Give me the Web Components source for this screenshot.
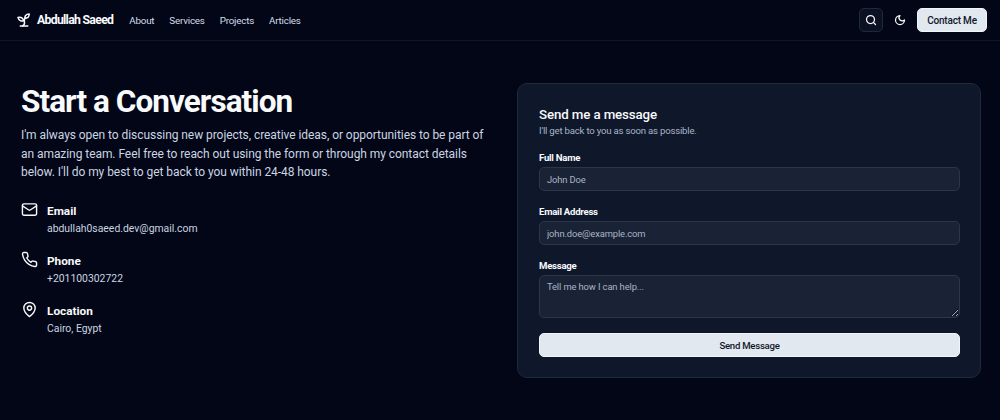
<!DOCTYPE html>
<html lang="en">
<head>
<meta charset="utf-8">
<title>Contact</title>
<style>
  html, body { margin: 0; height: 100%; }
  body {
    background: #020617;
    color: #f8fafc;
    font-family: Roboto, "Open Sans", sans-serif;
    overflow: hidden;
  }
</style>
</head>
<body>
<site-header></site-header>
<contact-page>
  <contact-intro slot="left">
    <contact-item label="Email" value="abdullah0saeed.dev@gmail.com" icon="mail"></contact-item>
    <contact-item label="Phone" value="+201100302722" icon="phone"></contact-item>
    <contact-item label="Location" value="Cairo, Egypt" icon="pin"></contact-item>
  </contact-intro>
  <contact-form slot="right"></contact-form>
</contact-page>

<script>
// Lucide style icons, shared by the header and the contact list
const ICONS = {
  sprout: '<path d="M7 20h10"/><path d="M10 20c5.5-2.5.8-6.4 3-10"/><path d="M9.5 9.4c1.1.8 1.8 2.2 2.3 3.7-2 .4-3.5.4-4.8-.3-1.2-.6-2.3-1.9-3-4.2 2.8-.5 4.4 0 5.5.8z"/><path d="M14.1 6a7 7 0 0 0-1.1 4c1.9-.1 3.3-.6 4.3-1.4 1-1 1.6-2.3 1.7-4.6-2.7.1-4 1-4.9 2z"/>',
  search: '<circle cx="11" cy="11" r="8"/><path d="m21 21-4.3-4.3"/>',
  moon: '<path d="M12 3a6 6 0 0 0 9 9 9 9 0 1 1-9-9Z"/>',
  mail: '<rect width="20" height="16" x="2" y="4" rx="2"/><path d="m22 7-8.97 5.7a1.94 1.94 0 0 1-2.06 0L2 7"/>',
  phone: '<path d="M22 16.92v3a2 2 0 0 1-2.18 2 19.79 19.79 0 0 1-8.63-3.07 19.5 19.5 0 0 1-6-6 19.79 19.79 0 0 1-3.07-8.67A2 2 0 0 1 4.11 2h3a2 2 0 0 1 2 1.72 12.84 12.84 0 0 0 .7 2.81 2 2 0 0 1-.45 2.11L8.09 9.91a16 16 0 0 0 6 6l1.27-1.27a2 2 0 0 1 2.11-.45 12.84 12.84 0 0 0 2.81.7A2 2 0 0 1 22 16.92z"/>',
  pin: '<path d="M20 10c0 6-8 12-8 12s-8-6-8-12a8 8 0 0 1 16 0Z"/><circle cx="12" cy="10" r="3"/>'
};

function icon(name, size, stroke = 2) {
  return `<svg width="${size}" height="${size}" viewBox="0 0 24 24" fill="none" stroke="currentColor" stroke-width="${stroke}" stroke-linecap="round" stroke-linejoin="round">${ICONS[name]}</svg>`;
}

class SiteHeader extends HTMLElement {
  constructor() {
    super();
    this.attachShadow({ mode: 'open' });
  }

  connectedCallback() {
    this.shadowRoot.innerHTML = `
      <style>
        :host {
          display: flex;
          align-items: center;
          height: 40px;
          padding: 0 13px 0 15px;
          border-bottom: 1px solid #0f172a;
        }
        .brand {
          display: flex;
          align-items: center;
          gap: 4px;
          font-size: 12.25px;
          font-weight: 700;
          letter-spacing: -0.7px;
          color: #f8fafc;
          margin-right: 16px;
        }
        .brand svg { display: block; margin-top: -1px; }
        nav { display: flex; gap: 15px; }
        nav a {
          font-size: 9.8px;
          letter-spacing: -0.2px;
          color: #d5dde8;
          text-decoration: none;
        }
        .actions { margin-left: auto; display: flex; align-items: center; }
        .square {
          display: flex;
          align-items: center;
          justify-content: center;
          box-sizing: border-box;
          width: 24px;
          height: 24px;
          border-radius: 5px;
          color: #f8fafc;
        }
        .search { background: #0b1122; border: 1px solid #1e293b; margin-right: 5px; }
        .contact {
          margin-left: 5px;
          box-sizing: border-box;
          height: 24px;
          width: 70px;
          display: flex;
          align-items: center;
          justify-content: center;
          border-radius: 5px;
          background: #e2e8f0;
          border: 1px solid #f1f5f9;
          color: #0f172a;
          font-size: 10px;
          font-weight: 500;
          letter-spacing: -0.2px;
        }
      </style>
      <div class="brand">${icon('sprout', 18)}<span>Abdullah Saeed</span></div>
      <nav>
        <a href="#">About</a>
        <a href="#">Services</a>
        <a href="#">Projects</a>
        <a href="#">Articles</a>
      </nav>
      <div class="actions">
        <div class="square search">${icon('search', 12, 2.5)}</div>
        <div class="square">${icon('moon', 12, 2.5)}</div>
        <div class="contact">Contact Me</div>
      </div>`;
  }
}

class ContactPage extends HTMLElement {
  constructor() {
    super();
    this.attachShadow({ mode: 'open' });
    this.shadowRoot.innerHTML = `
      <style>
        :host {
          display: grid;
          grid-template-columns: 1fr 464px;
          column-gap: 28px;
          padding: 42px 19px 0 21px;
        }
      </style>
      <slot name="left"></slot>
      <slot name="right"></slot>`;
  }
}

class ContactIntro extends HTMLElement {
  constructor() {
    super();
    this.attachShadow({ mode: 'open' });
    this.shadowRoot.innerHTML = `
      <style>
        :host { display: block; }
        h1 {
          margin: 0;
          font-size: 31.5px;
          line-height: 37px;
          font-weight: 700;
          letter-spacing: -0.95px;
          color: #f8fafc;
        }
        p {
          margin: 6px 0 19px;
          font-size: 12px;
          line-height: 18.5px;
          letter-spacing: -0.06px;
          color: #cbd5e1;
        }
        .list { display: flex; flex-direction: column; gap: 12px; }
      </style>
      <h1>Start a Conversation</h1>
      <p>I'm always open to discussing new projects, creative ideas, or opportunities to be part of an amazing team. Feel free to reach out using the form or through my contact details below. I'll do my best to get back to you within 24-48 hours.</p>
      <div class="list"><slot></slot></div>`;
  }
}

class ContactItem extends HTMLElement {
  constructor() {
    super();
    this.attachShadow({ mode: 'open' });
  }

  connectedCallback() {
    this.shadowRoot.innerHTML = `
      <style>
        :host { display: flex; gap: 9px; align-items: flex-start; }
        svg { display: block; color: #f8fafc; }
        .label { font-size: 11.8px; line-height: 18px; font-weight: 700; color: #f8fafc; padding-top: 1.5px; }
        .value { font-size: 10.4px; line-height: 18.5px; color: #cbd5e1; }
      </style>
      <div>${icon(this.getAttribute('icon'), 17)}</div>
      <div>
        <div class="label">${this.getAttribute('label')}</div>
        <div class="value">${this.getAttribute('value')}</div>
      </div>`;
  }
}

class ContactForm extends HTMLElement {
  constructor() {
    super();
    this.attachShadow({ mode: 'open' });
    this.shadowRoot.innerHTML = `
      <style>
        :host {
          display: block;
          box-sizing: border-box;
          height: 295px;
          padding: 21px 20px 0 21px;
          background: #0f172a;
          border: 1px solid #1e293b;
          border-radius: 10px;
        }
        h2 { margin: 0; font-size: 13.3px; line-height: 20px; font-weight: 500; letter-spacing: -0.12px; color: #f8fafc; }
        .sub { margin: 0 0 14px; font-size: 9.6px; line-height: 12px; letter-spacing: -0.2px; color: #a8b5c8; }
        label { display: block; font-size: 9.6px; line-height: 14px; font-weight: 700; letter-spacing: -0.25px; color: #f8fafc; margin-bottom: 2px; }
        .field { margin-bottom: 14px; }
        input, textarea {
          display: block;
          box-sizing: border-box;
          width: 100%;
          margin: 0;
          padding: 0 7px;
          background: #1a2335;
          border: 1px solid #2c3648;
          border-radius: 5px;
          font: 400 9.4px Roboto, "Open Sans", sans-serif;
          letter-spacing: -0.12px;
          color: #f8fafc;
          outline: none;
        }
        input { height: 24px; }
        textarea { height: 42.5px; padding-top: 5px; resize: vertical; }
        ::placeholder { color: #a8b5c8; opacity: 1; }
        button {
          display: block;
          box-sizing: border-box;
          width: 100%;
          height: 24px;
          margin-top: 15.5px;
          background: #e2e8f0;
          border: 1px solid #f1f5f9;
          border-radius: 5px;
          color: #0f172a;
          font: 500 9.6px Roboto, "Open Sans", sans-serif;
          letter-spacing: -0.25px;
        }
      </style>
      <h2>Send me a message</h2>
      <div class="sub">I'll get back to you as soon as possible.</div>
      <div class="field"><label>Full Name</label><input placeholder="John Doe"></div>
      <div class="field"><label>Email Address</label><input placeholder="john.doe@example.com"></div>
      <div class="field"><label>Message</label><textarea placeholder="Tell me how I can help..."></textarea></div>
      <button type="button">Send Message</button>`;
  }
}

customElements.define('site-header', SiteHeader);
customElements.define('contact-page', ContactPage);
customElements.define('contact-intro', ContactIntro);
customElements.define('contact-item', ContactItem);
customElements.define('contact-form', ContactForm);
</script>
</body>
</html>
